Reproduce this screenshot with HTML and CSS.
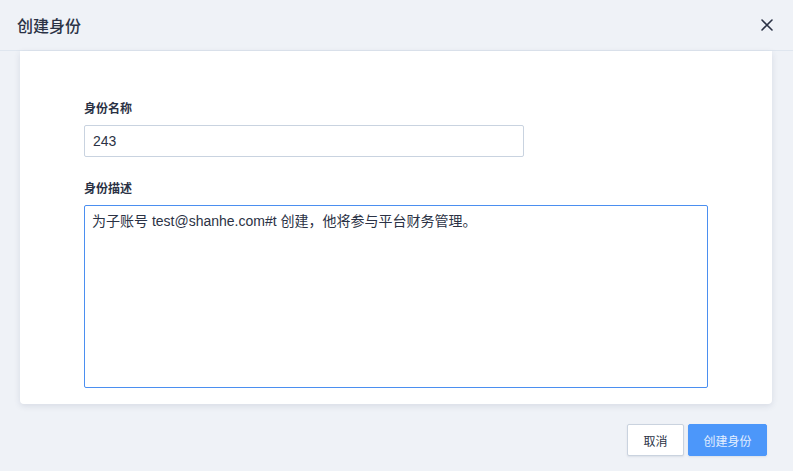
FILE: index.html
```html
<!DOCTYPE html>
<html lang="zh-CN">
<head>
<meta charset="utf-8">
<title>创建身份</title>
<link rel="stylesheet" href="styles.css">
</head>
<body>
<div class="dialog">
  <header class="dialog-header">
    <h1 class="dialog-title">创建身份</h1>
    <button class="close-btn" aria-label="关闭">
      <svg width="12" height="12" viewBox="0 0 12 12"><path d="M1 1L11 11M11 1L1 11" stroke="#2b3245" stroke-width="1.6" stroke-linecap="round"/></svg>
    </button>
  </header>
  <main class="dialog-body">
    <section class="card">
      <div class="field">
        <label class="field-label">身份名称</label>
        <div class="input">243</div>
      </div>
      <div class="field field-desc">
        <label class="field-label">身份描述</label>
        <div class="textarea">为子账号 test@shanhe.com#t 创建，他将参与平台财务管理。</div>
      </div>
    </section>
  </main>
  <footer class="dialog-footer">
    <button class="btn btn-default">取消</button>
    <button class="btn btn-primary">创建身份</button>
  </footer>
</div>
</body>
</html>
```

FILE: styles.css
```css
* { box-sizing: border-box; }
html, body { margin: 0; padding: 0; }
body {
  width: 793px;
  height: 471px;
  background: #eff2f7;
  font-family: "Liberation Sans", "Noto Sans CJK SC", sans-serif;
  color: #2b3245;
  overflow: hidden;
}
.dialog { display: flex; flex-direction: column; height: 471px; }
.dialog-header {
  height: 51px;
  flex: none;
  display: flex;
  align-items: center;
  justify-content: space-between;
  padding: 0 20px 1px 17px;
  border-bottom: 1px solid #dfe6ef;
  background: #eff2f7;
}
.dialog-title {
  margin: 0;
  font-size: 16px;
  font-weight: 500;
  font-family: "Noto Sans CJK SC", sans-serif;
  color: #2b3245;
  line-height: 22px;
}
.close-btn {
  border: 0;
  background: none;
  padding: 0;
  width: 12px;
  height: 12px;
  display: flex;
  margin-top: 0;
}
.dialog-body { padding: 0 21px 0 20px; }
.card {
  background: #fff;
  border-radius: 0 0 4px 4px;
  box-shadow: 0 2px 6px rgba(40, 60, 100, 0.12);
  padding: 48px 64px 16px 64px;
  height: 353px;
}
.field { display: flex; flex-direction: column; }
.field-label {
  font-size: 12px;
  font-weight: 700;
  line-height: 18px;
  font-family: "Noto Sans CJK SC", sans-serif;
  color: #2b3245;
  margin-bottom: 8px;
}
.field-desc { margin-top: 22px; }
.input {
  width: 440px;
  height: 32px;
  border: 1px solid #c9d3e0;
  border-radius: 2px;
  padding: 0 8px;
  font-size: 14px;
  line-height: 30px;
  color: #2b3245;
}
.textarea {
  width: 624px;
  height: 183px;
  border: 1px solid #4b8ff0;
  border-radius: 2px;
  padding: 5px 7px;
  font-size: 14px;
  line-height: 20px;
  color: #2b3245;
}
.dialog-footer {
  display: flex;
  justify-content: flex-end;
  gap: 4px;
  padding: 20px 26px 0 0;
}
.btn {
  height: 32px;
  border-radius: 2px;
  font-size: 12px;
  font-family: "Noto Sans CJK SC", sans-serif;
  padding: 0;
  cursor: pointer;
}
.btn-default {
  width: 57px;
  background: #fff;
  border: 1px solid #cad3df;
  color: #2b3245;
  box-shadow: 0 1px 2px rgba(40, 60, 100, 0.1);
}
.btn-primary {
  width: 79px;
  background: #4c97fa;
  border: 1px solid #4c97fa;
  color: #e3eeff;
  box-shadow: 0 1px 2px rgba(40, 60, 100, 0.1);
}
```
